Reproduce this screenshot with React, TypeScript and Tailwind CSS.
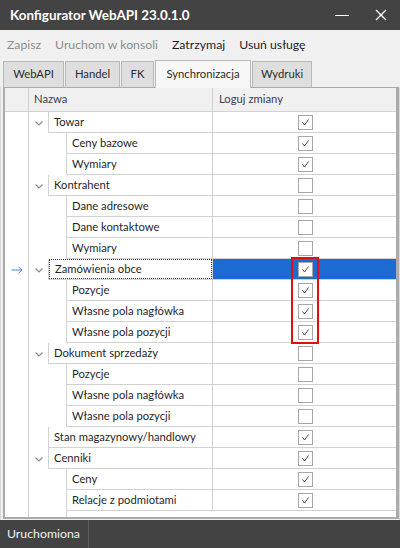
import React from 'react';

type Row = {
  label: string;
  level: 0 | 1;
  expandable?: boolean;
  checked: boolean;
  selected?: boolean;
};

const ROWS: Row[] = [
  { label: 'Towar', level: 0, expandable: true, checked: true },
  { label: 'Ceny bazowe', level: 1, checked: true },
  { label: 'Wymiary', level: 1, checked: true },
  { label: 'Kontrahent', level: 0, expandable: true, checked: false },
  { label: 'Dane adresowe', level: 1, checked: false },
  { label: 'Dane kontaktowe', level: 1, checked: false },
  { label: 'Wymiary', level: 1, checked: false },
  { label: 'Zamówienia obce', level: 0, expandable: true, checked: true, selected: true },
  { label: 'Pozycje', level: 1, checked: true },
  { label: 'Własne pola nagłówka', level: 1, checked: true },
  { label: 'Własne pola pozycji', level: 1, checked: true },
  { label: 'Dokument sprzedaży', level: 0, expandable: true, checked: false },
  { label: 'Pozycje', level: 1, checked: false },
  { label: 'Własne pola nagłówka', level: 1, checked: false },
  { label: 'Własne pola pozycji', level: 1, checked: false },
  { label: 'Stan magazynowy/handlowy', level: 0, checked: true },
  { label: 'Cenniki', level: 0, expandable: true, checked: true },
  { label: 'Ceny', level: 1, checked: true },
  { label: 'Relacje z podmiotami', level: 1, checked: true },
];

const TABS = [
  { label: 'WebAPI', w: 'w-[61px]' },
  { label: 'Handel', w: 'w-[55px]' },
  { label: 'FK', w: 'w-[33px]' },
  { label: 'Synchronizacja', w: 'w-[96px]', active: true },
  { label: 'Wydruki', w: 'w-[60px]' },
];

function CheckBox({ checked }: { checked: boolean }) {
  return (
    <div className="w-[15px] h-[15px] border border-[#a6a6a6] bg-white flex items-center justify-center">
      {checked && (
        <svg width="13" height="13" viewBox="0 0 13 13">
          <path d="M3.5 6.5 L5.5 9 L9.5 3.5" fill="none" stroke="#4a4a4a" strokeWidth="1" />
        </svg>
      )}
    </div>
  );
}

function Chevron() {
  return (
    <svg width="8" height="5" viewBox="0 0 8 5">
      <path d="M0.5 0.5 L4 4 L7.5 0.5" fill="none" stroke="#8c8c8c" strokeWidth="1.2" />
    </svg>
  );
}

export default function App() {
  return (
    <div
      className="relative w-[400px] h-[548px] flex flex-col bg-[#f0f0f0] overflow-hidden text-[11.25px]"
      style={{ fontFamily: 'Lato, "Noto Sans", sans-serif' }}
    >
      {/* title bar */}
      <div className="h-[30px] bg-[#434343] flex items-center pl-[10px] text-white">
        <span className="font-bold text-[13.4px] flex-1">Konfigurator WebAPI 23.0.1.0</span>
        <span className="w-[14px] h-[1px] bg-white mr-[26px]" />
        <svg width="12" height="12" viewBox="0 0 12 12" className="mr-[13px]">
          <path d="M1 1 L11 11 M11 1 L1 11" stroke="white" strokeWidth="1.4" />
        </svg>
      </div>

      {/* menu */}
      <div className="h-[30px] flex items-center pl-[7px] gap-[14px] text-[12.25px]">
        <span className="text-[#8d8d8d]">Zapisz</span>
        <span className="text-[#8d8d8d]">Uruchom w konsoli</span>
        <span className="text-[#1e1e1e]">Zatrzymaj</span>
        <span className="text-[#1e1e1e]">Usuń usługę</span>
      </div>

      {/* tabs */}
      <div className="h-[27px] flex items-end pl-[3px] gap-[1px]">
        {TABS.map(t => (
          <div
            key={t.label}
            className={`${t.w} flex items-center justify-center border border-b-0 border-[#b9b9b9] text-[#2b2b2b] ${
              t.active ? 'h-[28px] bg-[#f7f7f7] -mb-[1px] relative z-10' : 'h-[26px] bg-[#dedede]'
            }`}
          >
            {t.label}
          </div>
        ))}
      </div>

      {/* page */}
      <div className="flex-1 flex flex-col border-l border-r border-[#d9d9d9] pl-[2px] pb-[1px]">
        <div className="flex-1 flex flex-col bg-white border-t border-l-2 border-r-[3px] border-b-2 border-[#ababab]">
          {/* header */}
          <div className="h-[24px] flex bg-[#f0f0f0] border-b border-[#d2d2d2] text-[#3c3c50]">
            <div className="w-[24px] border-r border-[#d2d2d2]" />
            <div className="w-[184px] border-r border-[#d2d2d2] flex items-center pl-[5px]">Nazwa</div>
            <div className="flex-1 flex items-center pl-[6px]">Loguj zmiany</div>
          </div>

          {/* rows */}
          {ROWS.map((r, i) => (
            <div key={i} className="h-[21px] flex text-[#1f1f2a]">
              <div className="w-[24px] border-r border-[#d2d2d2] flex items-center justify-center">
                {r.selected && (
                  <svg width="12" height="8" viewBox="0 0 12 8">
                    <path d="M0.5 4 H11 M7.5 0.8 L11 4 L7.5 7.2" fill="none" stroke="#4a86d8" strokeWidth="1" />
                  </svg>
                )}
              </div>
              <div className={`${r.level === 0 ? 'w-[19px]' : 'w-[37px]'} flex items-center`}>
                {r.expandable && (
                  <div className="w-[19px] flex justify-center pt-[2px]">
                    <Chevron />
                  </div>
                )}
              </div>
              <div
                className={`flex-1 border-l border-r border-b border-[#d2d2d2] ${
                  r.level === 0 ? 'max-w-[165px]' : 'max-w-[147px]'
                } flex`}
              >
                <div
                  className={`flex-1 flex items-center pl-[5px] ${
                    r.selected ? 'border border-dotted border-[#333] pl-[4px]' : ''
                  }`}
                >
                  <span className="whitespace-nowrap">{r.label}</span>
                </div>
              </div>
              <div
                className={`w-[183px] border-b border-[#d2d2d2] flex items-center justify-center pl-[1px] ${
                  r.selected ? 'bg-[#1b6bd2]' : ''
                }`}
              >
                <CheckBox checked={r.checked} />
              </div>
            </div>
          ))}
          <div className="flex-1 flex">
            <div className="w-[24px] border-r border-[#d2d2d2]" />
            <div className="w-[37px]" />
            <div className="w-[147px] border-l border-[#d2d2d2]" />
          </div>
        </div>
      </div>

      {/* status bar */}
      <div className="h-[28px] bg-[#434343] flex items-stretch text-[#f0f0f0] text-[12.3px]">
        <div className="w-[89px] border-r border-[#5c5c5c] flex items-center pl-[7px]">Uruchomiona</div>
      </div>

      {/* red highlight */}
      <div className="absolute left-[291px] top-[257px] w-[28px] h-[87px] border-2 border-[#e01010]" />
    </div>
  );
}
